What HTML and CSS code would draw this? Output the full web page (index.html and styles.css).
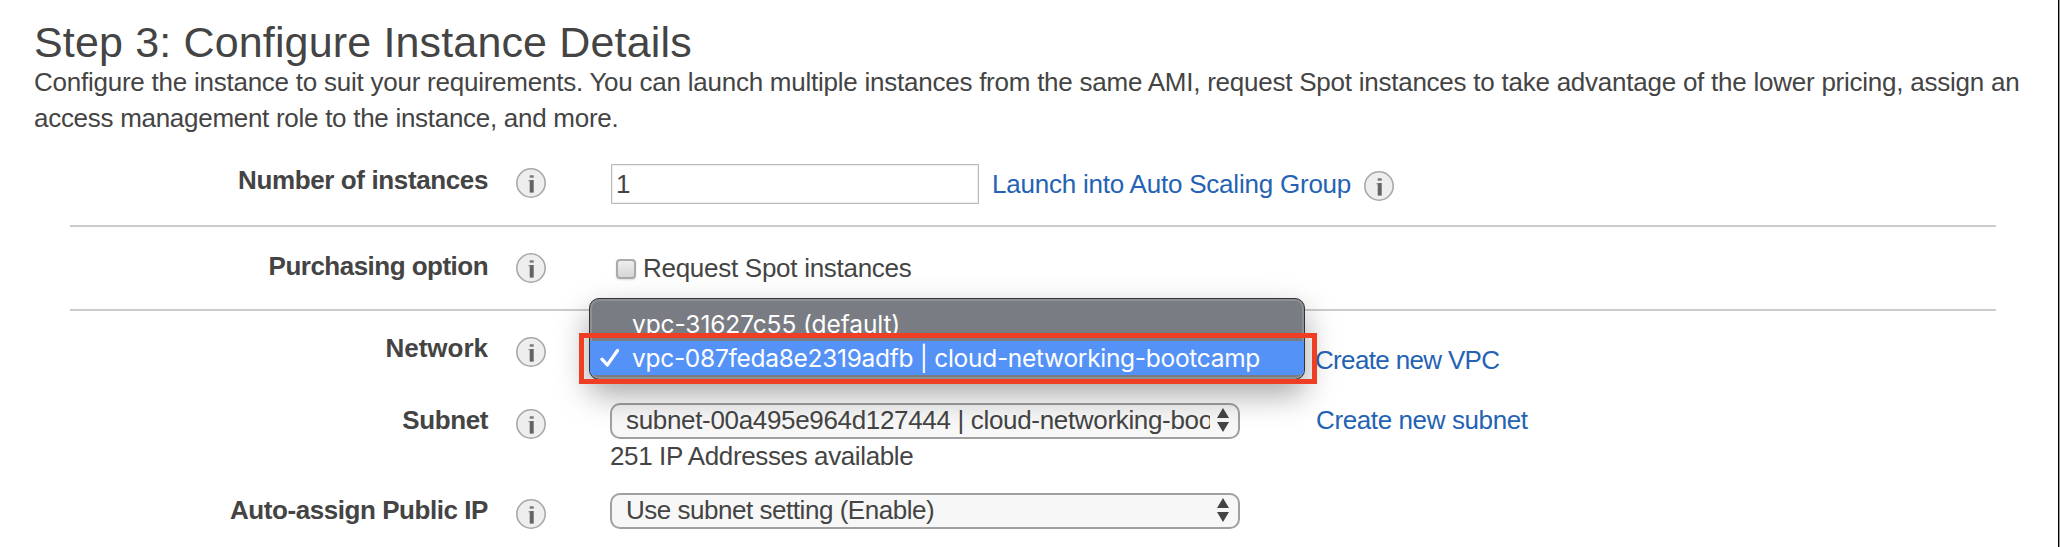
FILE: index.html
```html
<!DOCTYPE html>
<html lang="en">
<head>
<meta charset="utf-8">
<title>Configure Instance Details</title>
<link rel="stylesheet" href="styles.css">
</head>
<body>
<svg class="defs" width="0" height="0" aria-hidden="true">
  <symbol id="info" viewBox="0 0 30 30">
    <circle cx="15" cy="15" r="14.2" fill="#eeeeee" stroke="#a8a8a8" stroke-width="1.6"/>
    <rect x="13.7" y="7.3" width="4" height="2.4" fill="#777"/>
    <rect x="13.7" y="12" width="4" height="12.6" fill="#636363"/>
    <rect x="12.4" y="12" width="2" height="1.4" fill="#999"/>
  </symbol>
  <symbol id="arrows" viewBox="0 0 12 24">
    <path d="M6 0 12 10H0z M0 14H12L6 24z" fill="#444"/>
  </symbol>
</svg>
<main class="page">
  <h1 class="title">Step 3: Configure Instance Details</h1>
  <p class="intro"><span class="intro-lead">Configure the instance to suit your requirements. You can launch multiple instances from the same AMI, request Spot instances to take advantage of the lower pricing, assign an</span><br>access management role to the instance, and more.</p>
  <form class="form">
    <div class="row row-count">
      <label class="label">Number of instances</label>
      <svg class="info"><use href="#info"/></svg>
      <div class="control">
        <div class="input">1</div>
        <a class="link link-asg">Launch into Auto Scaling Group</a>
        <svg class="info info-asg"><use href="#info"/></svg>
      </div>
    </div>
    <div class="row row-purchase">
      <label class="label">Purchasing option</label>
      <svg class="info"><use href="#info"/></svg>
      <div class="control">
        <span class="checkbox"></span>
        <span class="check-label">Request Spot instances</span>
      </div>
    </div>
    <div class="row row-network">
      <label class="label">Network</label>
      <svg class="info"><use href="#info"/></svg>
      <div class="control">
        <a class="link link-side">Create new VPC</a>
        <div class="menu">
          <div class="option option-first">vpc-31627c55 (default)</div>
          <div class="option option-selected">
            <svg class="tick" viewBox="0 0 20 20"><path d="M2 11.2 7.3 17 17.5 2.5" fill="none" stroke="#fff" stroke-width="3.2" stroke-linecap="round" stroke-linejoin="round"/></svg>
            <span>vpc-087feda8e2319adfb | cloud-networking-bootcamp</span>
          </div>
        </div>
        <div class="highlight"></div>
      </div>
    </div>
    <div class="row row-subnet">
      <label class="label">Subnet</label>
      <svg class="info"><use href="#info"/></svg>
      <div class="control">
        <div class="field">
          <div class="select"><span class="value">subnet-00a495e964d127444 | cloud-networking-bootcamp</span><svg class="arrows"><use href="#arrows"/></svg></div>
          <div class="hint">251 IP Addresses available</div>
        </div>
        <a class="link link-side">Create new subnet</a>
      </div>
    </div>
    <div class="row row-ip">
      <label class="label">Auto-assign Public IP</label>
      <svg class="info"><use href="#info"/></svg>
      <div class="control">
        <div class="select"><span class="value">Use subnet setting (Enable)</span><svg class="arrows"><use href="#arrows"/></svg></div>
      </div>
    </div>
  </form>
</main>
</body>
</html>
```
FILE: styles.css
```css
* { box-sizing: border-box; }
body {
  margin: 0;
  background: #fff;
  color: #444;
  font: 26px/30px "Liberation Sans", Arial, sans-serif;
}
.defs { display: block; }
.page {
  height: 547px;
  overflow: hidden;
  border-right: 1px solid #999;
  box-shadow: inset -1px 0 #000;
}
.title {
  margin: 0;
  padding: 17px 0 0 34px;
  font-size: 43px;
  line-height: 50px;
  height: 64px;
  font-weight: 400;
  letter-spacing: .155px;
  white-space: nowrap;
}
.intro {
  margin: 0;
  padding-left: 34px;
  height: 76px;
  line-height: 36px;
  letter-spacing: -.285px;
  white-space: nowrap;
}
.intro-lead { letter-spacing: -.242px; }
.form { margin: 0 63px 0 70px; }
.row {
  display: grid;
  grid-template-columns: 418px 30px 1fr;
  column-gap: 28px;
  align-items: start;
  white-space: nowrap;
}
.row-count { height: 87px; border-bottom: 2px solid #ccc; }
.row-purchase { height: 84px; border-bottom: 2px solid #ccc; }
.row-network { height: 84px; }
.row-subnet { height: 90px; }
.row-ip { height: 62px; }
.label { font-weight: 700; text-align: right; }
.row-count .label { padding-top: 25px; letter-spacing: -.38px; }
.row-purchase .label { padding-top: 24px; letter-spacing: -.52px; }
.row-network .label { padding-top: 22px; }
.row-subnet .label { padding-top: 10px; letter-spacing: -.4px; }
.row-ip .label { padding-top: 10px; letter-spacing: -.44px; }
.info { display: block; flex: none; width: 30px; height: 30px; }
.row-count .info { margin-top: 28px; }
.row-purchase .info, .row-network .info { margin-top: 26px; }
.row-subnet .info, .row-ip .info { margin-top: 14px; }
.row-count .info-asg { margin: 31px 0 0 13px; }
.control {
  position: relative;
  display: flex;
  align-items: flex-start;
  padding-left: 36px;
}
.input {
  width: 368px;
  height: 40px;
  margin: 24px 0 0 1px;
  padding: 4px 0 0 4px;
  border: 1px solid #bbb;
  box-shadow: inset 0 0 0 1px #eee;
}
.link { color: #2463b4; }
.link-asg { margin: 29px 0 0 13px; letter-spacing: -.22px; }
.checkbox {
  width: 20px;
  height: 20px;
  margin: 32px 0 0 6px;
  border: 2px solid #aaa;
  border-radius: 4px;
  background: linear-gradient(#eee, #d6d6d6);
  box-shadow: 0 1px 2px #ddd;
}
.check-label { margin: 26px 0 0 7px; letter-spacing: -.28px; }
.row-network .link-side { margin: 34px 0 0 705px; letter-spacing: -.66px; }
.row-subnet .link-side { margin: 10px 0 0 76px; letter-spacing: -.39px; }
.menu {
  position: absolute;
  z-index: 2;
  left: 15px;
  top: -13px;
  width: 716px;
  height: 82px;
  overflow: hidden;
  border: 1px solid #333;
  border-radius: 10px;
  background: #797c82;
  font: 24.5px/32px Inter, sans-serif;
  color: #fff;
  box-shadow: inset 0 0 0 2px #8d9094, 0 14px 32px rgba(0, 0, 0, .36);
}
.option { padding-left: 42px; }
.option-first {
  height: 34px;
  padding-top: 9px;
  overflow: hidden;
  letter-spacing: -.1px;
}
.option-selected {
  display: flex;
  gap: 12px;
  align-items: center;
  height: 34px;
  margin-top: 8px;
  padding-left: 10px;
  background: #5592f7;
  letter-spacing: -.295px;
}
.tick { flex: none; width: 20px; height: 20px; }
.highlight {
  position: absolute;
  z-index: 3;
  left: 5px;
  top: 22px;
  width: 738px;
  height: 51px;
  border: 5px solid #ee3f24;
}
.select {
  display: flex;
  justify-content: space-between;
  width: 630px;
  height: 36px;
  margin-top: 8px;
  padding: 0 9px 0 14px;
  border: 2px solid #a0a0a0;
  border-radius: 10px;
  background: #f7f7f7;
  letter-spacing: -.33px;
}
.row-ip .select { letter-spacing: -.47px; }
.value { width: 584px; overflow: hidden; }
.arrows { width: 12px; height: 24px; margin-top: 3px; }
.hint { margin-top: 2px; letter-spacing: -.38px; }
```
